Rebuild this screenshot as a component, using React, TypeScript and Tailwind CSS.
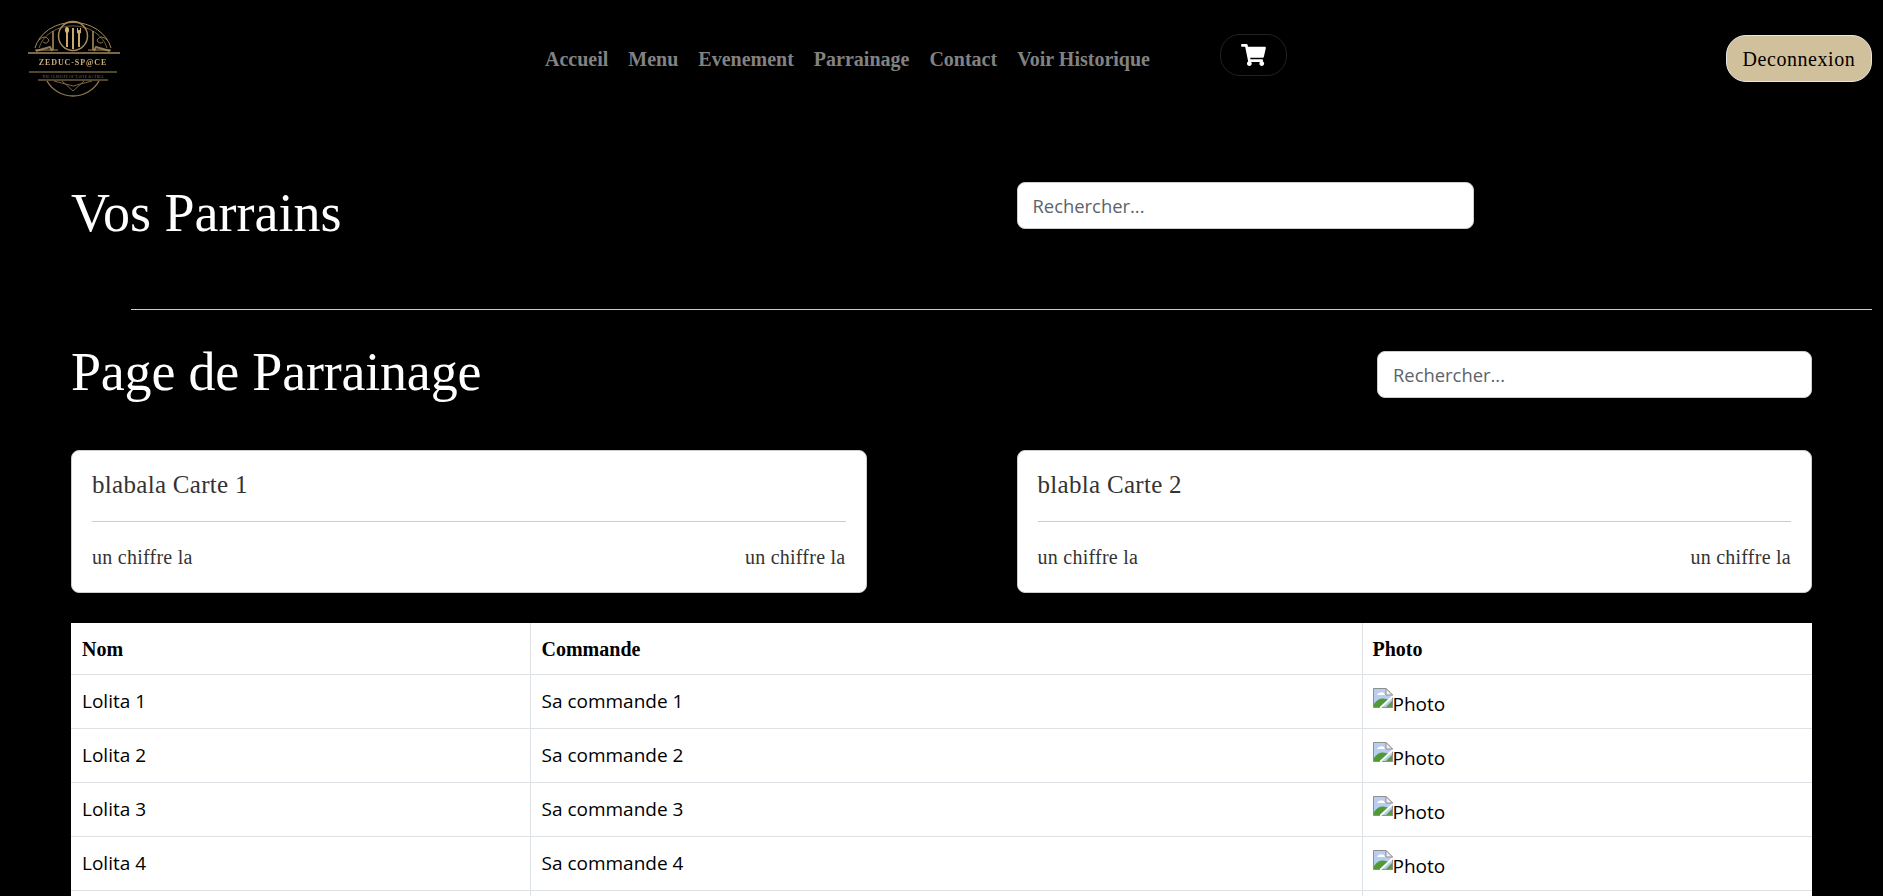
import React from 'react';
import { FaShoppingCart } from 'react-icons/fa';

const serif = { fontFamily: '"Liberation Serif", serif' };

const navLinks = ['Accueil', 'Menu', 'Evenement', 'Parrainage', 'Contact', 'Voir Historique'];
const rows = [1, 2, 3, 4];

const Logo = () => (
  <svg width="96" height="82" viewBox="0 0 96 82" fill="none" stroke="#a58a5c" strokeWidth="1" className="shrink-0 blur-[0.4px]">
    {/* outer arches */}
    <path d="M9 33 A39 33 0 0 1 85 33" />
    <path d="M13 33 A35 29 0 0 1 81 33" stroke="#6e5c3e" />
    <circle cx="47" cy="21" r="14.5" strokeWidth="1.5" />
    {/* cutlery */}
    <path d="M41 17 V32 M47 13 V34 M53 15 V32" stroke="#c9aa72" strokeWidth="2" />
    <ellipse cx="41" cy="15" rx="2" ry="3" fill="#d8b777" stroke="none" />
    <path d="M51.5 13 V18 H54.5 V13" stroke="#c9aa72" strokeWidth="1" />
    <path d="M27 16 V35 M67 16 V35" strokeWidth="1.6" />
    {/* scrolls */}
    <path d="M13 25 q6 -6 10 0 q-2 5 -6 2 M81 25 q-6 -6 -10 0 q2 5 6 2" stroke="#8f784f" />
    <path d="M10 36 L24 32 L26 36 M84 36 L70 32 L68 36" stroke="#8f784f" strokeWidth="2" />
    <path d="M9 35 H32 M62 35 H85" strokeWidth="1" />
    <path d="M2 38 H94" strokeWidth="1.6" />
    <text x="47" y="50" textAnchor="middle" fill="#c8ad7c" stroke="none" fontSize="8" fontWeight="700" letterSpacing="0.9" style={serif}>
      ZEDUC-SP@CE
    </text>
    <path d="M3 57 H91" strokeWidth="1" />
    <text x="47" y="62.5" textAnchor="middle" fill="#6f5f45" stroke="none" fontSize="4" style={serif}>
      THE CLIMATE OF TASTE &amp; CHILL
    </text>
    <path d="M12 65 H82" strokeWidth="1" />
    {/* bottom fan */}
    <path d="M21 66 A30 30 0 0 0 73 66" stroke="#8f784f" strokeWidth="1.4" />
    <path d="M28 66 L47 71 L66 66 M36 66 L47 76 L58 66" stroke="#7b6646" />
  </svg>
);

const BrokenImage = () => (
  <svg width="20" height="20" viewBox="0 0 20 20" className="mt-[2px] inline-block shrink-0">
    <path d="M0.5 0.5 H13 L19.5 7 V19.5 H0.5 Z" fill="#b9cdf0" stroke="#8f8f8f" />
    <path d="M13 0.5 V7 H19.5 Z" fill="#f2f2f2" stroke="#8f8f8f" />
    <path d="M4 7 q1 -3 4 -2.5 q3 -1 4 2.5 Z" fill="#fff" />
    <path d="M1 19 V16 Q6 9 13 11 L16 12 L9 19 Z" fill="#4f9a35" />
    <path d="M13 19 L19 13 V19 Z" fill="#5b9a40" />
    <path d="M7 20 L20 8" stroke="#fff" strokeWidth="1.8" />
    <path d="M0.5 19.5 H7 M14 19.5 H19.5 M19.5 14 V19.5" stroke="#8f8f8f" />
  </svg>
);

const SearchInput = ({ className }: { className: string }) => (
  <input
    type="text"
    placeholder="Rechercher..."
    className={`h-[47px] rounded-[8px] border border-[#ccc] bg-white px-[15px] text-[18.4px] text-black placeholder:text-[#5c636a] ${className}`}
    style={{ fontFamily: '"Open Sans", sans-serif' }}
  />
);

const StatCard = ({ title }: { title: string }) => (
  <div className="h-[143px] rounded-[8px] border border-[#ccc] bg-white px-[20px] text-[#333]" style={serif}>
    <h3 className="pt-[17px] pb-[19px] text-[25px] leading-[34px] tracking-[0.3px]">{title}</h3>
    <div className="border-t border-[#ccc]" />
    <div className="flex justify-between pt-[22px] text-[20px] leading-[26px] tracking-[0.25px]">
      <span>un chiffre la</span>
      <span>un chiffre la</span>
    </div>
  </div>
);

export default function App() {
  return (
    <div className="h-screen overflow-hidden bg-black">
      <header className="flex h-[100px] items-start">
        <div className="ml-[26px] mt-[15px]">
          <Logo />
        </div>
        <nav className="ml-[423px] mt-[46px] flex gap-[20px] text-[20px] font-bold leading-[27px] text-[#828282]" style={serif}>
          {navLinks.map((link) => (
            <a key={link} href="#">
              {link}
            </a>
          ))}
        </nav>
        <button className="ml-[70px] mt-[34px] flex h-[42px] w-[67px] items-center justify-center rounded-[20px] border border-[#222] bg-black text-white">
          <FaShoppingCart className="h-[22px] w-[25px]" />
        </button>
        <button
          className="ml-[439px] mt-[35px] h-[47px] w-[146px] rounded-[20px] border border-[#e5e5e5] bg-[#d1c09c] text-[20px] tracking-[0.55px] text-black"
          style={serif}
        >
          Deconnexion
        </button>
      </header>

      <main className="px-[71px]">
        <section className="grid grid-cols-2 gap-[150px] pt-[82px]">
          <h1 className="text-[54px] leading-[62px] text-white" style={serif}>
            Vos Parrains
          </h1>
          <SearchInput className="w-[457px]" />
        </section>

        <div className="-mr-[60px] ml-[60px] mt-[65px] border-t border-[#ccc]" />

        <section className="mt-[31px] flex items-start justify-between">
          <h1 className="text-[54px] leading-[62px] tracking-[-0.2px] text-white" style={serif}>
            Page de Parrainage
          </h1>
          <SearchInput className="mt-[10px] w-[435px]" />
        </section>

        <section className="mt-[47px] grid grid-cols-2 gap-[150px]">
          <StatCard title="blabala Carte 1" />
          <StatCard title="blabla Carte 2" />
        </section>

        <table
          className="mt-[30px] w-full table-fixed border-collapse bg-white text-[19px] text-black"
          style={{ fontFamily: '"Open Sans", sans-serif' }}
        >
          <colgroup>
            <col className="w-[459px]" />
            <col className="w-[832px]" />
            <col />
          </colgroup>
          <thead>
            <tr className="h-[51px] border-b border-[#dee2e6] text-left text-[20px] font-bold" style={serif}>
              <th className="px-[11px] pt-[2px]">Nom</th>
              <th className="border-l border-[#dee2e6] px-[11px] pt-[2px]">Commande</th>
              <th className="border-l border-[#dee2e6] px-[10px] pt-[2px]">Photo</th>
            </tr>
          </thead>
          <tbody>
            {rows.map((n) => (
              <tr key={n} className="h-[54px] border-b border-[#dee2e6]">
                <td className="px-[11px]">Lolita {n}</td>
                <td className="border-l border-[#dee2e6] px-[11px]">Sa commande {n}</td>
                <td className="border-l border-[#dee2e6] px-[10px]">
                  <span className="flex items-start">
                    <BrokenImage />
                    <span className="mt-[5px] leading-[26px]">Photo</span>
                  </span>
                </td>
              </tr>
            ))}
            <tr className="h-[54px]">
              <td />
              <td className="border-l border-[#dee2e6]" />
              <td className="border-l border-[#dee2e6]" />
            </tr>
          </tbody>
        </table>
      </main>
    </div>
  );
}
